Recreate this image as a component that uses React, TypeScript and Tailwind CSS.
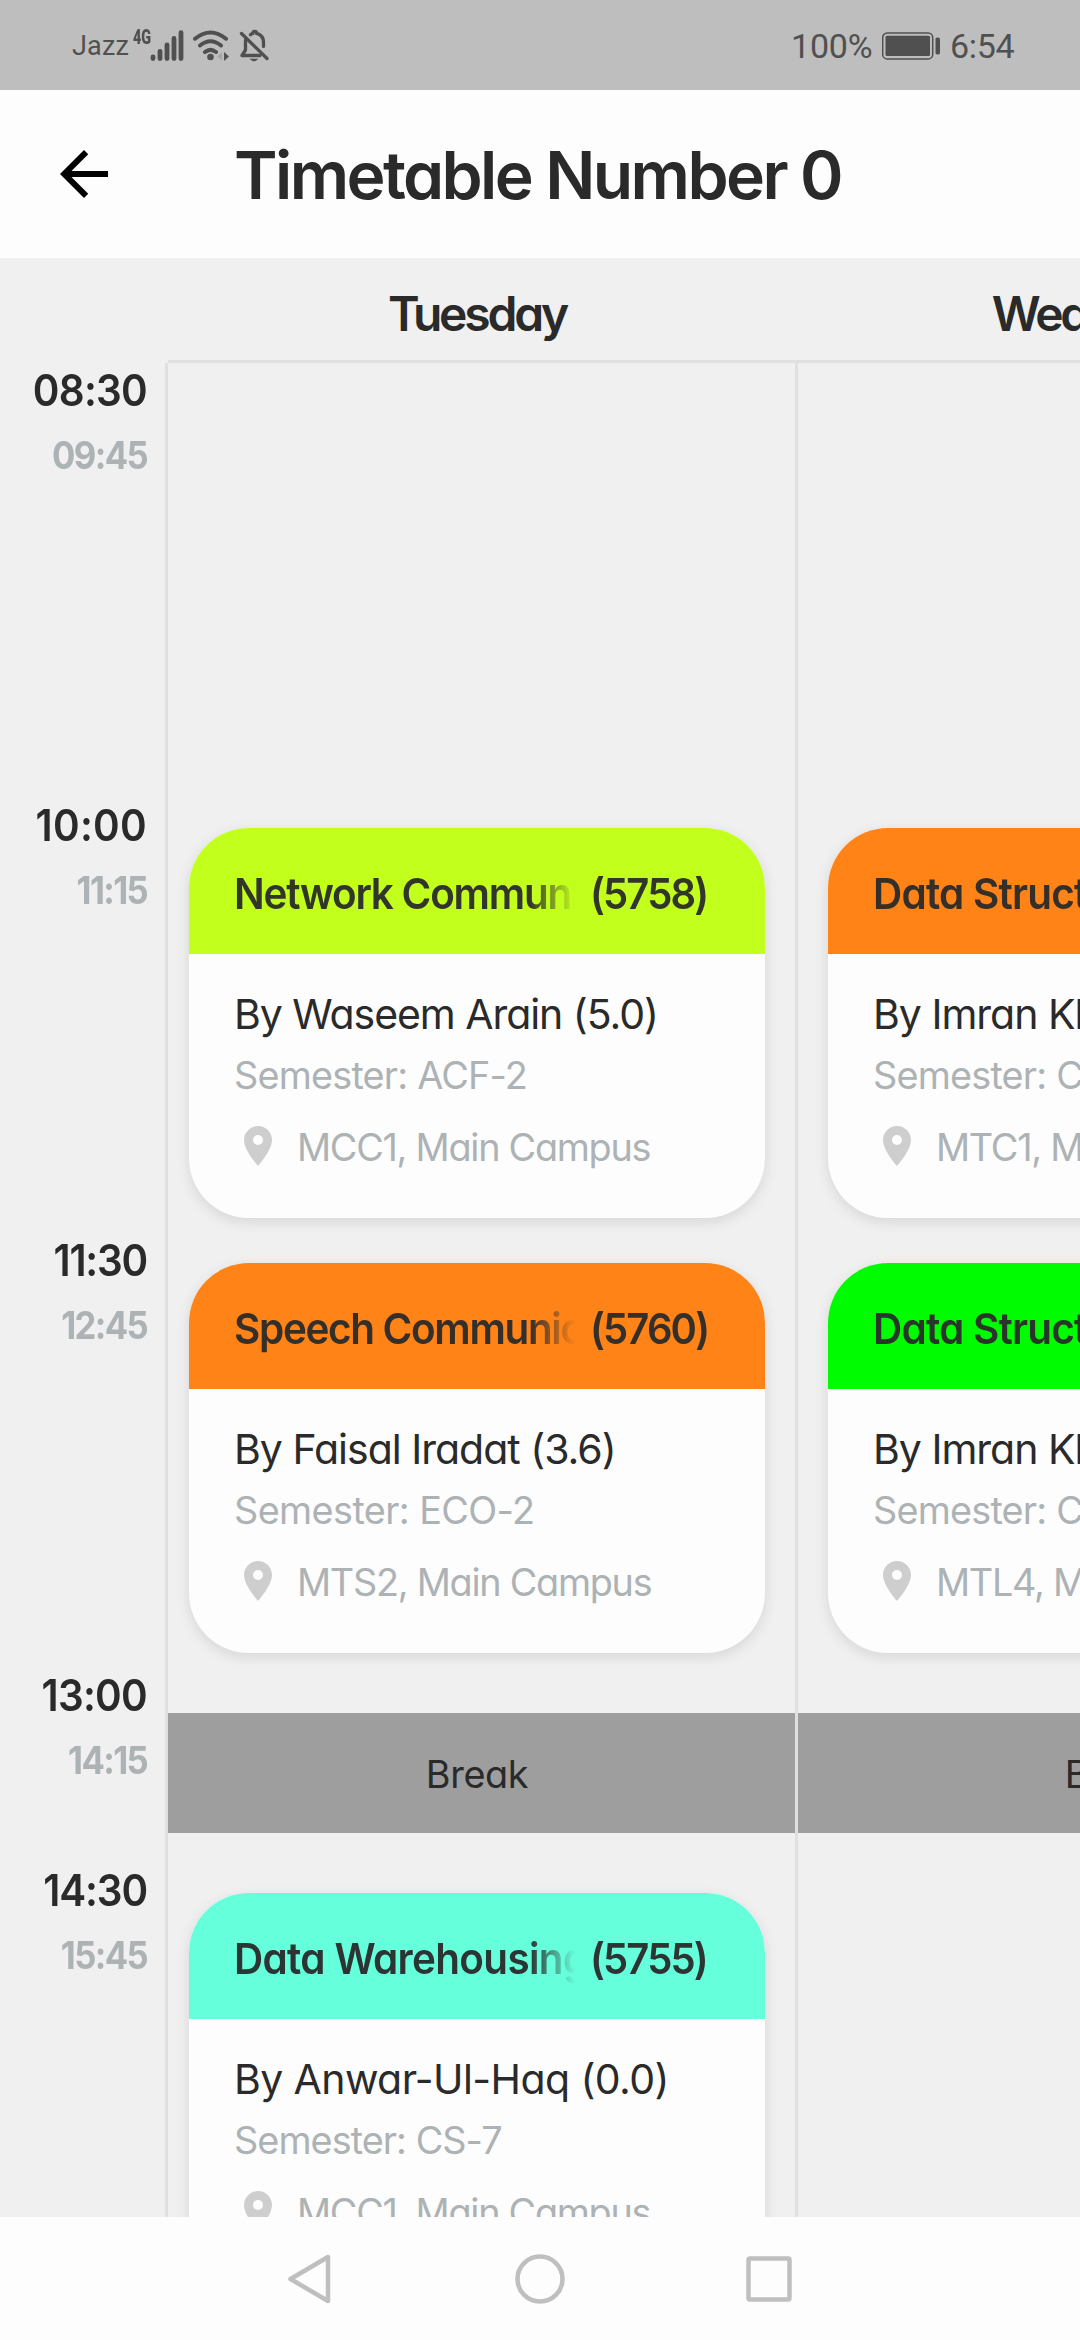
import type { ReactNode } from "react";

type Slot = { start: string; end: string; height: string; startTrack: string };
type Course = {
  title: string;
  titleTrack: string;
  code: string;
  color: string;
  teacher: string;
  teacherTrack: string;
  semester: string;
  semesterTrack: string;
  place: string;
};

const slots: Slot[] = [
  { start: "08:30", end: "09:45", height: "h-[435px]", startTrack: "tracking-[-0.8px]" },
  { start: "10:00", end: "11:15", height: "h-[435px]", startTrack: "tracking-[0.3px]" },
  { start: "11:30", end: "12:45", height: "h-[435px]", startTrack: "tracking-[-1.3px]" },
  { start: "13:00", end: "14:15", height: "h-[195px]", startTrack: "tracking-[-0.8px]" },
  { start: "14:30", end: "15:45", height: "h-[435px]", startTrack: "tracking-[-1.2px]" },
];

const network: Course = {
  title: "Network Communication",
  titleTrack: "tracking-[-1.3px]",
  code: "(5758)",
  color: "bg-[#c3ff1c]",
  teacher: "By Waseem Arain (5.0)",
  teacherTrack: "tracking-[-1.05px]",
  semester: "Semester: ACF-2",
  semesterTrack: "tracking-[-0.8px]",
  place: "MCC1, Main Campus",
};
const speech: Course = {
  title: "Speech Communication",
  titleTrack: "tracking-[-1.4px]",
  code: "(5760)",
  color: "bg-[#ff8316]",
  teacher: "By Faisal Iradat (3.6)",
  teacherTrack: "tracking-[-1px]",
  semester: "Semester: ECO-2",
  semesterTrack: "tracking-[-0.6px]",
  place: "MTS2, Main Campus",
};
const warehousing: Course = {
  title: "Data Warehousing",
  titleTrack: "tracking-[-0.7px]",
  code: "(5755)",
  color: "bg-[#66ffdc]",
  teacher: "By Anwar-Ul-Haq (0.0)",
  teacherTrack: "tracking-[-0.6px]",
  semester: "Semester: CS-7",
  semesterTrack: "tracking-[-0.95px]",
  place: "MCC1, Main Campus",
};
const structuresTheory: Course = {
  title: "Data Structures",
  titleTrack: "tracking-[-0.8px]",
  code: "(5741)",
  color: "bg-[#ff8316]",
  teacher: "By Imran Khan (4.2)",
  teacherTrack: "tracking-[-1px]",
  semester: "Semester: CS-2",
  semesterTrack: "tracking-[-0.8px]",
  place: "MTC1, Main Campus",
};
const structuresLab: Course = {
  ...structuresTheory,
  code: "(5742)",
  color: "bg-[#00fc00]",
  place: "MTL4, Main Campus",
};

function StatusBar() {
  return (
    <div className="flex h-[90px] shrink-0 items-start justify-between bg-[#bebebe] pl-[72px] pr-[66px] font-['Roboto',sans-serif] text-[#505050]">
      <div className="flex">
        <span className="mt-[30px] w-[61px] text-[27px] leading-[32px] tracking-[0.2px]">Jazz</span>
        <span className="mt-[26px] w-[17px] origin-left scale-x-[0.72] text-[20px] leading-[22px] font-black">4G</span>
        <svg className="mt-[28px] h-[36px] w-[34px]" viewBox="0 0 34 36" stroke="currentColor" strokeWidth="4.8" strokeLinecap="round">
          <path d="M3 28.8v1.8M10 23.300v7.300M17 17v13.600M24 10.500v20.100M31 4.700v25.900" />
        </svg>
        <svg className="mt-[28px] ml-[8px] h-[36px] w-[38px]" viewBox="0 0 38 36" fill="none" stroke="currentColor" strokeWidth="4" strokeLinecap="round">
          <path d="M3 10.700q15.500-12.500 31 0M8 17.500q10.500-8.500 21 0M13 24q5.500-4.200 11 0" />
          <circle cx="18.500" cy="29" r="3.300" fill="currentColor" stroke="none" />
          <path d="M32 24l5 4.500-5 4.500z" fill="currentColor" stroke="none" />
          <path d="M30 24.500l-5 4 5 4z" fill="#a6a6a6" stroke="none" />
        </svg>
        <svg className="mt-[28px] ml-[9px] h-[36px] w-[31px]" viewBox="0 0 31 36" fill="none" stroke="currentColor" strokeWidth="3.300" strokeLinecap="round">
          <path d="M2.500 5.500l25.500 25" />
          <path d="M6.500 12v10l-3.500 5.500h18" strokeLinejoin="round" />
          <path d="M11.500 6.800c1-.8 1.600-1.200 2.300-1.400.2-2.600 3.600-2.600 3.900 0 4.300 1.300 6.800 4.400 6.800 9v4" />
          <path d="M12.500 31.500h5q-2.500 2-5 0z" strokeWidth="1.500" />
        </svg>
      </div>
      <div className="mt-[28px] flex text-[34px] leading-[37px]">
        <span className="w-[91px] tracking-[-0.2px]">100%</span>
        <svg className="mt-[4px] h-[28px] w-[60px]" viewBox="0 0 60 28">
          <rect x="0.700" y="0.900" width="50" height="26" rx="4.500" fill="none" stroke="currentColor" strokeWidth="1.500" />
          <rect x="3.500" y="3.700" width="44.500" height="20.400" rx="1.500" fill="currentColor" />
          <rect x="53.500" y="5.500" width="4.500" height="17" rx="1.800" fill="currentColor" />
        </svg>
        <span className="ml-[8px] w-[64px] whitespace-nowrap tracking-[-0.300px]">6:54</span>
      </div>
    </div>
  );
}

function TitleBar() {
  return (
    <header className="flex h-[168px] shrink-0 items-center bg-[#fdfdfd] pl-[48px]">
      <svg className="h-[72px] w-[72px]" viewBox="0 0 24 24" fill="#000">
        <path d="M20 11H7.830l5.590-5.590L12 4l-8 8 8 8 1.410-1.410L7.830 13H20v-2z" />
      </svg>
      <h1 className="mt-[2px] ml-[114px] whitespace-nowrap text-[66px] leading-none font-semibold tracking-[-2.600px]">Timetable Number 0</h1>
    </header>
  );
}

function CourseCard({ course }: { course: Course }) {
  return (
    <article className="mx-[30px] h-[390px] overflow-hidden rounded-[60px] bg-[#fdfdfd] whitespace-nowrap shadow-[0_4px_14px_rgba(0,0,0,0.11)]">
      <div className={`flex h-[126px] items-center pt-[4px] pl-[45px] text-[43px] leading-[60px] font-semibold text-[#2a2a2a]/95 ${course.color}`}>
        <div className="w-[341px] overflow-hidden [mask-image:linear-gradient(to_right,#000_calc(100%-45px),transparent)]">
          <span className={`inline-block origin-left scale-x-[0.94] ${course.titleTrack}`}>{course.title}</span>
        </div>
        <span className="ml-[15px] origin-left scale-x-[0.93] tracking-[-2px]">{course.code}</span>
      </div>
      <div className="pt-[30px] pl-[45px]">
        <p className={`text-[41px] leading-[60px] ${course.teacherTrack}`}>{course.teacher}</p>
        <p className={`text-[37.800px] leading-[63px] text-[#adb2b5] ${course.semesterTrack}`}>{course.semester}</p>
        <p className="flex h-[81px] items-center gap-[15px] text-[37.800px] leading-none tracking-[-1.280px] text-[#adb2b5]">
          <svg className="-mt-[3px] h-[48px] w-[48px] shrink-0" viewBox="0 0 24 24" fill="#cecece">
            <path d="M12 2C8.130 2 5 5.130 5 9c0 5.250 7 13 7 13s7-7.750 7-13c0-3.870-3.130-7-7-7zm0 9.500a2.500 2.500 0 0 1 0-5 2.500 2.500 0 0 1 0 5z" />
          </svg>
          {course.place}
        </p>
      </div>
    </article>
  );
}

function Cell({ course }: { course?: Course }) {
  return <div className="h-[435px] shrink-0 pt-[30px]">{course && <CourseCard course={course} />}</div>;
}

function Break() {
  return (
    <div className="flex h-[195px] shrink-0 flex-col justify-center pt-[15px]">
      <div className="flex h-[120px] items-center justify-center bg-[#9e9e9e] pt-[3px] text-[37.800px] tracking-[-0.400px]">Break</div>
    </div>
  );
}

function DayColumn({ day, children }: { day: string; children: ReactNode }) {
  return (
    <section className="flex w-[639px] shrink-0 flex-col">
      <h2 className="flex h-[102px] shrink-0 items-center justify-center pt-[9px] pr-[3px] text-[48px] leading-none font-semibold tracking-[-3.200px]">{day}</h2>
      <div className="h-[3px] shrink-0 bg-[#e0e0e0]" />
      <div className="flex flex-1 flex-col border-r-[3px] border-[#e0e0e0]">{children}</div>
    </section>
  );
}

function TimeAxis() {
  return (
    <aside className="mt-[105px] w-[168px] shrink-0 border-r-[3px] border-[#e0e0e0] pr-[18px] text-right">
      {slots.map((slot) => (
        <div key={slot.start} className={slot.height}>
          <p className={`origin-right scale-x-[0.93] text-[43.500px] leading-[54px] font-semibold ${slot.startTrack}`}>{slot.start}</p>
          <p className="origin-right scale-x-[0.9] text-[38.500px] leading-[76px] font-bold tracking-[-1.800px] text-[#adb2b5]">{slot.end}</p>
        </div>
      ))}
    </aside>
  );
}

function NavBar() {
  return (
    <nav className="flex h-[123px] shrink-0 items-center justify-center gap-[175px] bg-[#fdfdfd]">
      <svg className="h-[54px] w-[54px]" viewBox="0 0 54 54" fill="none" stroke="#bfbfbf" strokeWidth="4.500" strokeLinejoin="round">
        <path d="M44 5v44L6.500 27z" />
      </svg>
      <svg className="h-[54px] w-[54px]" viewBox="0 0 54 54" fill="none" stroke="#bfbfbf" strokeWidth="4.500">
        <circle cx="27" cy="27" r="22.500" />
      </svg>
      <svg className="h-[54px] w-[54px]" viewBox="0 0 54 54" fill="none" stroke="#bfbfbf" strokeWidth="4.500">
        <rect x="6.500" y="6.500" width="41" height="41" rx="1.500" />
      </svg>
    </nav>
  );
}

export default function App() {
  return (
    <div className="flex h-[2340px] w-[1080px] flex-col overflow-hidden bg-[#f0f0f0] font-['Inter',sans-serif] text-[#2a2a2a] [font-feature-settings:'cv11']">
      <StatusBar />
      <TitleBar />
      <main className="flex h-[1959px] shrink-0 overflow-hidden">
        <TimeAxis />
        <div className="flex-1 overflow-hidden">
          <div className="-ml-[9px] flex h-[2178px]">
            <DayColumn day="Tuesday">
              <Cell />
              <Cell course={network} />
              <Cell course={speech} />
              <Break />
              <Cell course={warehousing} />
            </DayColumn>
            <DayColumn day="Wednesday">
              <Cell />
              <Cell course={structuresTheory} />
              <Cell course={structuresLab} />
              <Break />
              <Cell />
            </DayColumn>
          </div>
        </div>
      </main>
      <NavBar />
    </div>
  );
}
